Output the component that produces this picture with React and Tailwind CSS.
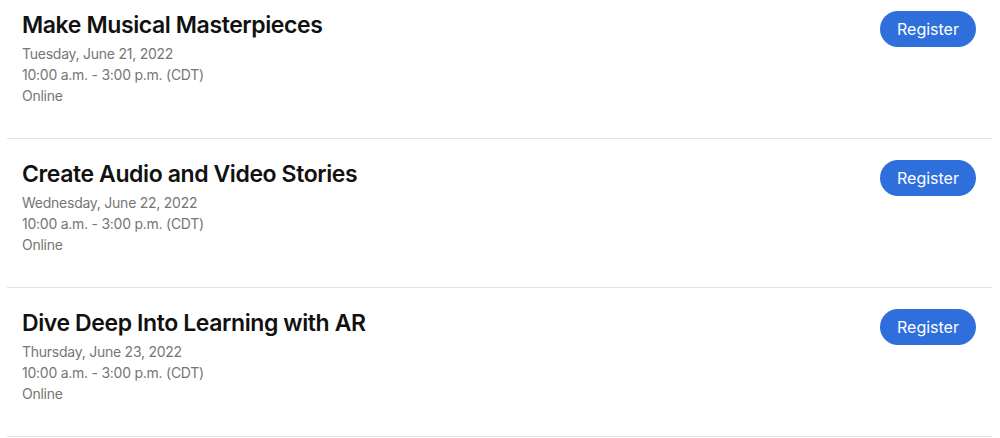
export default function App() {
  const events = [
    { title: "Make Musical Masterpieces", date: "Tuesday, June 21, 2022" },
    { title: "Create Audio and Video Stories", date: "Wednesday, June 22, 2022" },
    { title: "Dive Deep Into Learning with AR", date: "Thursday, June 23, 2022" },
  ];
  return (
    <div
      className="w-[1000px] h-[438px] bg-white pl-[7px] pr-[8px] overflow-hidden"
      style={{ fontFamily: "Inter, 'Noto Sans', sans-serif" }}
    >
      {events.map((e) => (
        <div
          key={e.title}
          className="flex items-start justify-between border-b border-[#e2e2e2] pl-[15px] pr-[16px] pt-[19px] first:pt-[9px] pb-[32px]"
        >
          <div>
            <h2 className="text-[23px] leading-[32px] font-semibold text-[#111] tracking-[-0.4px]">
              {e.title}
            </h2>
            <div className="mt-[2px] text-[14px] leading-[21px] text-[#767676] tracking-[-0.25px]">
              <p>{e.date}</p>
              <p>10:00 a.m. - 3:00 p.m. (CDT)</p>
              <p>Online</p>
            </div>
          </div>
          <button className="mt-[2px] h-[36px] w-[96px] rounded-full bg-[#2e6fdc] text-white text-[16px] leading-none">
            Register
          </button>
        </div>
      ))}
    </div>
  );
}
